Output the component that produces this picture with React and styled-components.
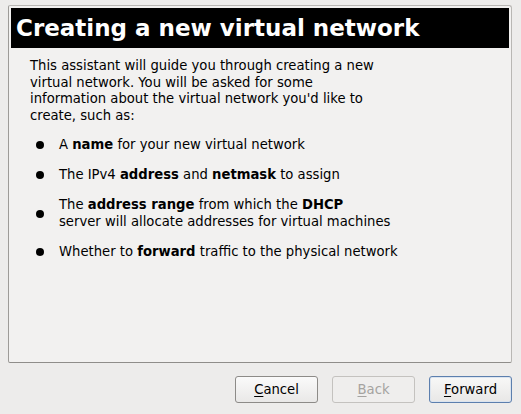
import React from "react";
import styled, { createGlobalStyle } from "styled-components";

const Global = createGlobalStyle`
  html, body {
    margin: 0;
    padding: 0;
    background: #edeceb;
    font-family: "DejaVu Sans", "Liberation Sans", sans-serif;
    color: #000;
  }
`;

const Page = styled.div`
  width: 521px;
  height: 414px;
  box-sizing: border-box;
  padding: 5px 9px 0 8px;
  display: flex;
  flex-direction: column;
`;

const Frame = styled.div`
  height: 358px;
  box-sizing: border-box;
  background: #f2f1f0;
  border: 1px solid #b9b7b4;
  border-left-color: #9d9b98;
  border-bottom-color: #8f8d8a;
  border-radius: 2px 3px 2px 2px;
  padding: 2px 2px 0 2px;
`;

const Header = styled.div`
  background: #000;
  color: #fff;
  height: 40px;
  display: flex;
  align-items: center;
  padding-left: 5px;
  font-weight: bold;
  font-size: 23px;
`;

const Body = styled.div`
  padding: 10px 0 0 19px;
  font-size: 13.2px;
  line-height: 16.7px;
`;

const Intro = styled.p`
  margin: 0;
`;

const List = styled.ul`
  list-style: none;
  margin: 12px 0 0 0;
  padding: 0;
  display: flex;
  flex-direction: column;
  gap: 13.3px;
`;

const Item = styled.li`
  display: flex;
  align-items: center;
`;

const Dot = styled.span`
  width: 8px;
  height: 8px;
  border-radius: 50%;
  background: #000;
  margin: 0 15px 0 6px;
  flex-shrink: 0;
`;

const Actions = styled.div`
  display: flex;
  justify-content: flex-end;
  gap: 14px;
  margin-top: 13px;
`;

const Button = styled.button`
  width: 83px;
  height: 27px;
  box-sizing: border-box;
  border-radius: 3px;
  font-family: "DejaVu Sans", "Liberation Sans", sans-serif;
  font-size: 13.2px;
  padding: 0;
  color: ${(p) => (p.disabled ? "#a5a3a0" : "#000")};
  border: 1px solid ${(p) => (p.primary ? "#5c7fae" : p.disabled ? "#c4c2bf" : "#8d8b88")};
  background: ${(p) =>
    p.disabled
      ? "#efeeed"
      : p.primary
      ? "linear-gradient(#f8f8f7, #e8e7e6)"
      : "linear-gradient(#fafafa, #e9e8e7)"};
  box-shadow: ${(p) => (p.primary ? "inset 0 0 0 1px #dbe4ef" : "none")};

  u {
    text-decoration: underline;
    text-underline-offset: 2px;
  }
`;

const bullets = [
  <>A <b>name</b> for your new virtual network</>,
  <>The IPv4 <b>address</b> and <b>netmask</b> to assign</>,
  <>
    The <b>address range</b> from which the <b>DHCP</b>
    <br />
    server will allocate addresses for virtual machines
  </>,
  <>Whether to <b>forward</b> traffic to the physical network</>,
];

export default function App() {
  return (
    <>
      <Global />
      <Page>
        <Frame>
          <Header>Creating a new virtual network</Header>
          <Body>
            <Intro>
              This assistant will guide you through creating a new
              <br />
              virtual network. You will be asked for some
              <br />
              information about the virtual network you'd like to
              <br />
              create, such as:
            </Intro>
            <List>
              {bullets.map((b, i) => (
                <Item key={i}>
                  <Dot />
                  <span>{b}</span>
                </Item>
              ))}
            </List>
          </Body>
        </Frame>
        <Actions>
          <Button>
            <u>C</u>ancel
          </Button>
          <Button disabled>
            <u>B</u>ack
          </Button>
          <Button primary>
            <u>F</u>orward
          </Button>
        </Actions>
      </Page>
    </>
  );
}
